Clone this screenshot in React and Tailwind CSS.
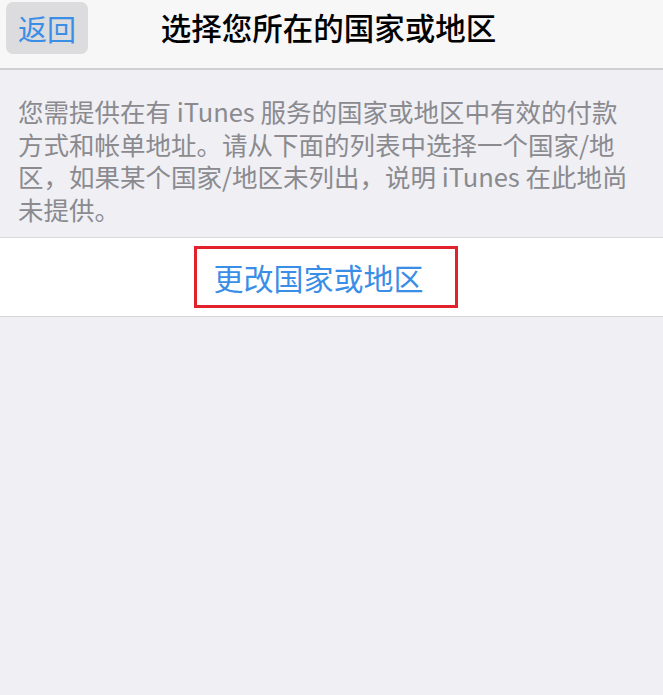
import React from 'react'

const lines = [
  "您需提供在有 iTunes 服务的国家或地区中有效的付款",
  "方式和帐单地址。请从下面的列表中选择一个国家/地",
  "区，如果某个国家/地区未列出，说明 iTunes 在此地尚",
  "未提供。",
];

const App = () => {
  return (
    <div
      className="w-[663px] h-[695px] bg-[#efeff4] flex flex-col overflow-hidden"
      style={{ fontFamily: '"Noto Sans CJK SC", "Noto Sans", sans-serif' }}
    >
      {/* nav bar */}
      <div className="h-[70px] bg-[#f7f7f7] border-b-2 border-[#cfcfd2] flex items-start relative">
        <button className="mt-[2px] ml-[6px] w-[82px] h-[52px] rounded-[7px] bg-[#dcdcde] text-[#3a8ee6] text-[29px] leading-none flex items-center justify-center">
          返回
        </button>
        <h1 className="absolute left-0 right-0 top-[9px] text-center text-[30.5px] leading-[36px] font-medium text-black pr-[6px]">
          选择您所在的国家或地区
        </h1>
      </div>

      {/* notice text */}
      <div className="pl-[18px] pt-[25px] pb-[12px] text-[25.5px] leading-[32.5px] text-[#8a8a8f] border-b border-[#d9d9de]">
        {lines.map((l, i) => (
          <div key={i} className="whitespace-nowrap">{l}</div>
        ))}
      </div>

      {/* change region row */}
      <div className="h-[79px] bg-white border-b border-[#d6d6da] flex items-center justify-center pr-[12px]">
        <div className="border-[3px] border-[#e2222b] w-[264px] h-[62px] flex items-center pl-[17px]">
          <span className="text-[#3a8ee6] text-[30px] leading-none">更改国家或地区</span>
        </div>
      </div>
    </div>
  );
}

export default App
